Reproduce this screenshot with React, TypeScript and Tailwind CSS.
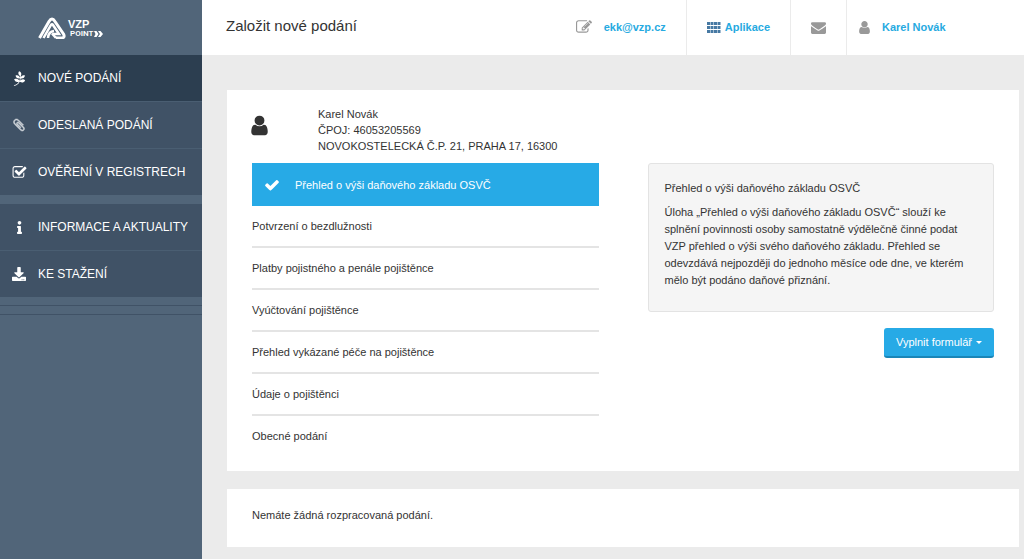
import type { ReactNode } from "react";
import { FaDownload, FaInfo, FaPagelines } from "react-icons/fa";

const paths = {
  clip: "M1596 1385q0 117-79 196t-196 79q-135 0-235-100l-777-776q-113-115-113-271 0-159 110-270t269-111q158 0 273 113l605 606q10 10 10 22 0 16-30.5 46.5t-46.5 30.5q-13 0-23-10l-606-607q-79-77-181-77-106 0-179 75t-73 181q0 105 76 181l776 777q63 63 145 63 64 0 106-42t42-106q0-82-63-145l-581-581q-26-24-60-24-29 0-48 19t-19 48q0 32 25 59l410 410q10 10 10 22 0 16-31 47t-47 31q-12 0-22-10l-410-410q-63-61-63-149 0-82 57-139t139-57q88 0 149 63l581 581q100 98 100 235z",
  checkSquare: "M1472 930v318q0 119-84.5 203.5t-203.5 84.5h-832q-119 0-203.5-84.5t-84.5-203.5v-832q0-119 84.5-203.5t203.5-84.5h832q63 0 117 25 15 7 18 23 3 17-9 29l-49 49q-10 10-23 10-3 0-9-2-23-6-45-6h-832q-66 0-113 47t-47 113v832q0 66 47 113t113 47h832q66 0 113-47t47-113v-254q0-13 9-22l64-64q10-10 23-10 6 0 12 3 20 8 20 29zm231-489l-814 814q-24 24-57 24t-57-24l-430-430q-24-24-24-57t24-57l110-110q24-24 57-24t57 24l263 263 647-647q24-24 57-24t57 24l110 110q24 24 24 57t-24 57z",
  edit: "M888 1184l116-116-152-152-116 116v56h96v96h56zm440-720q-16-16-33 1l-350 350q-17 17-1 33t33-1l350-350q17-17 1-33zm80 594v190q0 119-84.5 203.5t-203.5 84.5h-832q-119 0-203.5-84.5t-84.5-203.5v-832q0-119 84.5-203.5t203.5-84.5h832q63 0 117 25 15 7 18 23 3 17-9 29l-49 49q-14 14-32 8-23-6-45-6h-832q-66 0-113 47t-47 113v832q0 66 47 113t113 47h832q66 0 113-47t47-113v-126q0-13 9-22l64-64q15-15 35-7t20 29zm-96-738l288 288-672 672h-288v-288zm444 132l-92 92-288-288 92-92q28-28 68-28t68 28l152 152q28 28 28 68t-28 68z",
  user: "M1536 1399q0 109-62.5 187t-150.5 78h-854q-88 0-150.5-78t-62.5-187q0-85 8.5-160.5t31.5-152 58.5-131 94-89 134.5-34.5q131 128 313 128t313-128q76 0 134.5 34.5t94 89 58.5 131 31.5 152 8.5 160.5zm-256-887q0 159-112.5 271.5t-271.5 112.5-271.5-112.5-112.5-271.5 112.5-271.5 271.5-112.5 271.5 112.5 112.5 271.5z",
  envelope: "M1792 710v794q0 66-47 113t-113 47h-1472q-66 0-113-47t-47-113v-794q44 49 101 87 362 246 497 345 57 42 92.5 65.5t94.5 48 110 24.5h2q51 0 110-24.5t94.5-48 92.5-65.5q170-123 498-345 57-39 100-87zm0-294q0 79-49 151t-122 123q-376 261-468 325-10 7-42.5 31t-54 38.5-52 32.5-57.5 27-50 9h-2q-23 0-50-9t-57.5-27-52-32.5-54-38.5-42.5-31q-91-64-262-182.5t-205-142.5q-62-42-117-115.5t-55-136.5q0-78 41.5-130t118.5-52h1472q65 0 112.5 47t47.5 113z",
  check: "M1671 566q0 40-28 68l-724 724-136 136q-28 28-68 28t-68-28l-136-136-362-362q-28-28-28-68t28-68l136-136q28-28 68-28t68 28l294 295 656-657q28-28 68-28t68 28l136 136q28 28 28 68z",
};

function Icon({ name, className }: { name: keyof typeof paths; className: string }) {
  return (
    <svg viewBox="0 0 1792 1792" fill="currentColor" aria-hidden="true" className={className}>
      <path d={paths[name]} />
    </svg>
  );
}

function Logo() {
  return (
    <a href="#" aria-label="VZP Point" className="flex items-center gap-0.5 text-white">
      <svg viewBox="0 0 56 44" className="h-[22px] w-[28px]" fill="none" stroke="currentColor">
        <path d="M3 42 22 9q6-10 12 0l17 25q4 8-5 8H36" strokeWidth="6" />
        <path d="M11 42 26 16q2-3 4 0l12 18H29" strokeWidth="5" />
        <path d="M20 42q1-13 12-14M28 33l8 9" strokeWidth="5" />
      </svg>
      <span className="flex flex-col pt-0.5">
        <span className="text-[11px] leading-[10px] font-bold">VZP</span>
        <span className="flex items-center gap-px pl-0.5">
          <span className="font-['Roboto',sans-serif] text-[8px] leading-[9px] font-semibold">POINT</span>
          <svg viewBox="0 0 18 12" className="h-[6px] w-[9px]" fill="currentColor" aria-hidden="true">
            <path d="M0 0h5l4 6-4 6H0l3-6zM8 0h5l5 6-5 6H8l4-6z" />
          </svg>
        </span>
      </span>
    </a>
  );
}

function NavItem({ icon, label, active = false }: { icon: ReactNode; label: string; active?: boolean }) {
  return (
    <a
      href="#"
      aria-current={active ? "page" : undefined}
      className={`flex h-[46px] items-center gap-3 pl-3 text-white ${active ? "bg-[#2c3e50]" : "bg-[#405266]"}`}
    >
      <span className="flex w-[14px] justify-center">{icon}</span>
      {label}
    </a>
  );
}

const forms = [
  "Potvrzení o bezdlužnosti",
  "Platby pojistného a penále pojištěnce",
  "Vyúčtování pojištěnce",
  "Přehled vykázané péče na pojištěnce",
  "Údaje o pojištěnci",
  "Obecné podání",
];

export default function App() {
  return (
    <div className="flex min-h-screen bg-[#ebebeb] font-['Liberation_Sans',Arial,sans-serif] text-[11px] leading-4 text-[#333]">
      <aside className="w-[202px] shrink-0 bg-[#516579]">
        <div className="flex h-[55px] items-center pl-[38px]">
          <Logo />
        </div>
        <nav className="text-xs">
          <div className="flex flex-col gap-px bg-[#4a5e72]">
            <NavItem active icon={<FaPagelines className="size-[15px] shrink-0" />} label="NOVÉ PODÁNÍ" />
            <NavItem
              icon={
                <span className="text-[#d0d5da]">
                  <Icon name="clip" className="size-[14px] stroke-current stroke-[70]" />
                </span>
              }
              label="ODESLANÁ PODÁNÍ"
            />
            <NavItem icon={<Icon name="checkSquare" className="size-[15px] shrink-0" />} label="OVĚŘENÍ V REGISTRECH" />
          </div>
          <div className="mt-[9px] flex flex-col gap-px bg-[#4a5e72]">
            <NavItem icon={<FaInfo className="size-[13px]" />} label="INFORMACE A AKTUALITY" />
            <NavItem icon={<FaDownload className="size-[14px]" />} label="KE STAŽENÍ" />
          </div>
        </nav>
        <div className="mt-2 h-[10px] border-y border-[#405266]" />
      </aside>

      <div className="min-w-0 flex-1">
        <header className="flex h-[55px] bg-white font-bold text-[#27aae1]">
          <h1 className="flex-1 pt-4 pl-6 text-[15px] leading-5 font-normal text-[#333]">Založit nové podání</h1>
          <a href="#" className="flex items-center gap-3 pr-5 pb-px">
            <Icon name="edit" className="size-[16px] text-[#999]" />
            ekk@vzp.cz
          </a>
          <a href="#" className="flex items-center gap-1 border-l border-[#ebebeb] px-5 pb-px">
            <svg viewBox="0 0 28 22" className="h-[11px] w-[14px]" fill="#4779a3" aria-hidden="true">
              <path d="M0 0h6v6H0zM7 0h6v6H7zM14 0h6v6h-6zM21 0h6v6h-6zM0 8h6v6H0zM7 8h6v6H7zM14 8h6v6h-6zM21 8h6v6h-6zM0 16h6v6H0zM7 16h6v6H7zM14 16h6v6h-6zM21 16h6v6h-6z" />
            </svg>
            Aplikace
          </a>
          <a href="#" aria-label="Zprávy" className="flex items-center border-l border-[#ebebeb] px-5">
            <Icon name="envelope" className="size-[15px] text-[#999]" />
          </a>
          <a href="#" className="flex w-[178px] items-center gap-2.5 border-l border-[#ebebeb] pb-px pl-2.5">
            <Icon name="user" className="size-[15px] text-[#999]" />
            Karel Novák
          </a>
        </header>

        <main className="flex flex-col gap-[18px] pt-[35px] pr-[5px] pl-[25px]">
          <section className="bg-white px-[25px] pt-4 pb-[15px]">
            <div className="flex h-[57px] gap-[45px]">
              <Icon name="user" className="mt-2 -ml-1 size-[23px] shrink-0" />
              <p className="pl-0.5">
                Karel Novák
                <br />
                ČPOJ: 46053205569
                <br />
                NOVOKOSTELECKÁ Č.P. 21, PRAHA 17, 16300
              </p>
            </div>
            <div className="grid grid-cols-2 items-start gap-[49px]">
              <ul>
                <li>
                  <button className="flex h-[43px] w-full items-center gap-[15px] bg-[#27aae6] pl-3 text-left text-white">
                    <Icon name="check" className="size-[16px]" />
                    Přehled o výši daňového základu OSVČ
                  </button>
                </li>
                {forms.map((form) => (
                  <li key={form} className="border-b-2 border-[#e4e4e4] last:border-b-0">
                    <button className="h-[40px] w-full text-left">{form}</button>
                  </li>
                ))}
              </ul>
              <div>
                <div className="rounded-[3px] border border-[#e3e3e3] bg-[#f5f5f5] px-4 pt-4 pb-[22px]">
                  <p className="mb-2">Přehled o výši daňového základu OSVČ</p>
                  <p className="leading-[17px]">
                    Úloha „Přehled o výši daňového základu OSVČ“ slouží ke splnění povinnosti osoby samostatně výdělečně
                    činné podat VZP přehled o výši svého daňového základu. Přehled se odevzdává nejpozději do jednoho
                    měsíce ode dne, ve kterém mělo být podáno daňové přiznání.
                  </p>
                </div>
                <button className="mt-4 ml-auto flex h-[30px] w-[110px] items-center justify-center gap-1 rounded-[3px] border-b-2 border-[#1a86b8] bg-[#27aae6] text-white">
                  Vyplnit formulář
                  <svg viewBox="0 0 6 3" className="h-[3px] w-[6px]" fill="currentColor" aria-hidden="true">
                    <path d="M0 0h6L3 3z" />
                  </svg>
                </button>
              </div>
            </div>
          </section>
          <section className="bg-white px-[25px] pt-[18px] pb-6">
            <p>Nemáte žádná rozpracovaná podání.</p>
          </section>
        </main>
      </div>
    </div>
  );
}
